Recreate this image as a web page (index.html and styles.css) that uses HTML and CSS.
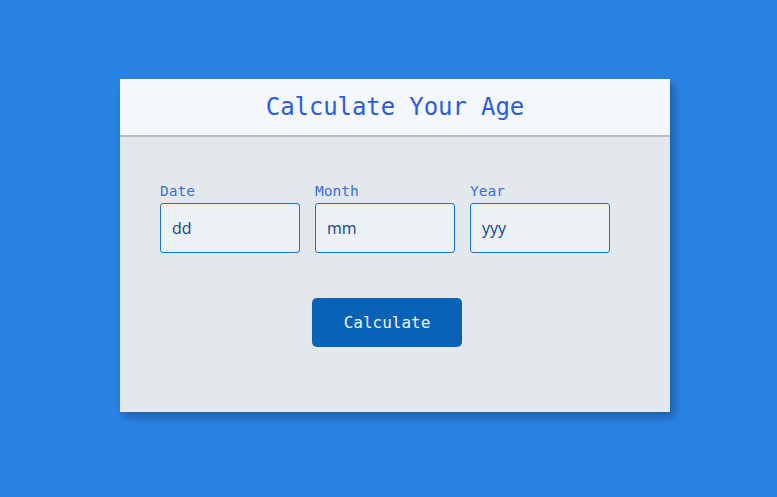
FILE: index.html
```html
<!DOCTYPE html>
<html>
<head>
<meta charset="utf-8">
<link rel="stylesheet" href="styles.css">
</head>
<body>
<div class="card">
  <div class="card-head">
    <h1 class="title">Calculate Your Age</h1>
  </div>
  <div class="card-body">
    <div class="form">
      <div class="fields">
        <div class="field">
          <label class="label">Date</label>
          <input class="input" type="text" placeholder="dd">
        </div>
        <div class="field">
          <label class="label">Month</label>
          <input class="input" type="text" placeholder="mm">
        </div>
        <div class="field">
          <label class="label">Year</label>
          <input class="input" type="text" placeholder="yyy">
        </div>
      </div>
      <div class="actions">
        <button class="btn" type="button">Calculate</button>
      </div>
    </div>
  </div>
</div>
</body>
</html>
```
FILE: styles.css
```css
html, body {
  margin: 0;
  padding: 0;
}
body {
  background: #2982e2;
  width: 777px;
  height: 497px;
  padding-top: 79px;
  box-sizing: border-box;
  font-family: "DejaVu Sans Mono", monospace;
}
.card {
  width: 550px;
  margin-left: 120px;
  background: #e3e8ec;
  box-shadow: 4px 5px 8px rgba(0, 0, 0, 0.28);
}
.card-head {
  height: 56px;
  background: #f4f7fc;
  border-bottom: 2px solid #b8bcc2;
  display: flex;
  align-items: center;
  justify-content: center;
}
.title {
  margin: 0;
  font-weight: normal;
  font-size: 24px;
  color: #2b5ce0;
  letter-spacing: -0.1px;
}
.card-body {
  padding: 46px 40px 65px 40px;
}
.form {
  width: 454px;
}
.fields {
  display: flex;
  gap: 15px;
}
.field {
  display: flex;
  flex-direction: column;
}
.label {
  font-size: 14.5px;
  line-height: 17px;
  color: #3a6de0;
  margin-bottom: 3px;
}
.input {
  width: 140px;
  height: 50px;
  box-sizing: border-box;
  border: 1px solid #1a74d6;
  border-radius: 3px;
  background: #ecf1f5;
  padding: 0 11px;
  font-family: "Open Sans", sans-serif;
  font-size: 16px;
  color: #1f3f8c;
  outline: none;
}
.input::placeholder {
  color: #223f8a;
  opacity: 1;
}
.actions {
  display: flex;
  justify-content: center;
  margin-top: 45px;
}
.btn {
  width: 150px;
  height: 49px;
  background: #0863b8;
  border: none;
  border-radius: 5px;
  color: #eef3ff;
  font-family: "DejaVu Sans Mono", monospace;
  font-size: 16px;
  cursor: pointer;
}
```
